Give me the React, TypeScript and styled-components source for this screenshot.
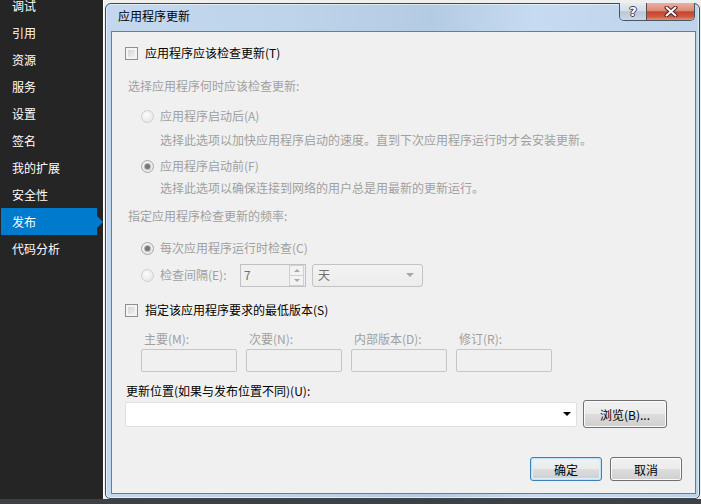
import React from "react";
import styled, { createGlobalStyle } from "styled-components";

const FONT = `"Noto Sans CJK SC", "Noto Sans", "Liberation Sans", sans-serif`;
const DISABLED = "#a0a0a0";

const Global = createGlobalStyle`
  html, body { margin: 0; padding: 0; width: 701px; height: 504px; overflow: hidden; background: #252526; }
  * { box-sizing: border-box; }
`;

const Screen = styled.div`
  width: 701px;
  height: 504px;
  display: flex;
  flex-direction: column;
  font-family: ${FONT};
  font-size: 12px;
`;

const Main = styled.div`
  display: flex;
  height: 499px;
`;

const StatusStrip = styled.div`
  height: 5px;
  background: #3d4044;
`;

const Sidebar = styled.nav`
  width: 103px;
  background: #252526;
  padding-left: 1px;
  overflow: hidden;
`;

const NavList = styled.ul`
  list-style: none;
  margin: -8px 0 0;
  padding: 0;
`;

const NavItem = styled.li<{ $active?: boolean }>`
  position: relative;
  width: 96px;
  height: 27px;
  line-height: 27px;
  padding-left: 11px;
  color: #ffffff;
  white-space: nowrap;
  background: ${(p) => (p.$active ? "#007acc" : "transparent")};
  &::after {
    content: "";
    display: ${(p) => (p.$active ? "block" : "none")};
    position: absolute;
    left: 100%;
    top: 50%;
    margin-top: -6px;
    border-left: 6px solid #007acc;
    border-top: 6px solid transparent;
    border-bottom: 6px solid transparent;
  }
`;

const Workspace = styled.div`
  flex: 1;
  display: flex;
  background: #efefef;
  border-left: 1px solid #ffffff;
  padding: 3px 1px 0 1px;
`;

const Dialog = styled.section`
  flex: 1;
  display: flex;
  flex-direction: column;
  border: 1px solid #3e4955;
  border-radius: 6px 6px 5px 5px;
  padding: 0 3px 4px 5px;
  background: linear-gradient(90deg, #c3d8ee 0%, #bed4eb 30%, #b4cbe4 55%, #c6dbf1 72%, #bdd3eb 100%);
  box-shadow: inset 0 0 0 1px rgba(255, 255, 255, 0.55);
`;

const TitleBar = styled.header`
  height: 27px;
  display: flex;
  align-items: flex-start;
`;

const TitleText = styled.span`
  padding-left: 7px;
  line-height: 24px;
  color: #000;
`;

const CaptionButtons = styled.div`
  margin-left: auto;
  margin-top: -1px;
  margin-right: 1px;
  display: flex;
  height: 18px;
  border: 1px solid #4a5561;
  border-top: none;
  border-radius: 0 0 5px 5px;
  overflow: hidden;
`;

const HelpButton = styled.div`
  width: 27px;
  display: flex;
  align-items: center;
  justify-content: center;
  border-right: 1px solid #5a4a4a;
  background: linear-gradient(180deg, #e4ebf3 0%, #d3dde8 45%, #bac8d6 52%, #c9d7e6 100%);
  color: #ffffff;
  font-family: "DejaVu Sans", sans-serif;
  font-weight: bold;
  font-size: 13px;
  line-height: 1;
  text-shadow: 1px 0 0 #38414b, -1px 0 0 #38414b, 0 1px 0 #38414b, 0 -1px 0 #38414b;
`;

const CloseButton = styled.div`
  width: 47px;
  display: flex;
  align-items: center;
  justify-content: center;
  background: linear-gradient(180deg, #eab0a2 0%, #dc8a78 45%, #c8452d 52%, #cf5a42 80%, #e3907a 100%);
`;

const Client = styled.div`
  flex: 1;
  display: flex;
  flex-direction: column;
  background: #f0f0f0;
  border: 1px solid #6e7b89;
  padding: 13px 13px 12px 13px;
  color: #000;
`;

const CheckRow = styled.label<{ $mt?: number }>`
  display: flex;
  align-items: center;
  gap: 7px;
  height: 16px;
  line-height: 16px;
  margin-top: ${(p) => p.$mt ?? 0}px;
`;

const CheckBox = styled.span`
  width: 13px;
  height: 13px;
  flex: none;
  border: 1px solid #8e8f8f;
  background: linear-gradient(135deg, #c9cdd3 0%, #e6e7e9 60%, #f7f7f7 100%);
  box-shadow: inset 0 0 0 2px #f4f4f4;
`;

const SectionLabel = styled.div<{ $mt?: number }>`
  padding-left: 3px;
  height: 16px;
  line-height: 16px;
  color: ${DISABLED};
  margin-top: ${(p) => p.$mt ?? 0}px;
`;

const OptionRow = styled.div<{ $mt?: number; $h?: number }>`
  display: flex;
  align-items: center;
  padding-left: 16px;
  height: ${(p) => p.$h ?? 16}px;
  line-height: 16px;
  color: ${DISABLED};
  margin-top: ${(p) => p.$mt ?? 0}px;
`;

const Radio = styled.span<{ $checked?: boolean }>`
  position: relative;
  width: 13px;
  height: 13px;
  flex: none;
  margin-right: 6px;
  border-radius: 50%;
  border: 1px solid ${(p) => (p.$checked ? "#a8a8a8" : "#cfcfcf")};
  background: radial-gradient(circle at 40% 35%, #fbfbfb 0%, #e9e9e9 70%, #dcdcdc 100%);
  &::after {
    content: "";
    display: ${(p) => (p.$checked ? "block" : "none")};
    position: absolute;
    left: 3px;
    top: 3px;
    width: 5px;
    height: 5px;
    border-radius: 50%;
    background: #777777;
    box-shadow: 0 0 0 1px #b8b8b8;
  }
`;

const OptionLabel = styled.span<{ $w?: number }>`
  white-space: nowrap;
  width: ${(p) => (p.$w ? `${p.$w}px` : "auto")};
`;

const Hint = styled.div<{ $mt?: number }>`
  padding-left: 35px;
  height: 16px;
  line-height: 16px;
  color: ${DISABLED};
  white-space: nowrap;
  margin-top: ${(p) => p.$mt ?? 0}px;
`;

const SpinBox = styled.div`
  display: flex;
  width: 66px;
  height: 23px;
  border: 1px solid #bfc1c6;
  background: #f0f0f0;
`;

const SpinValue = styled.span`
  flex: 1;
  padding-left: 3px;
  line-height: 20px;
  color: #707070;
`;

const SpinButtons = styled.div`
  width: 15px;
  margin: 0 1px 0 0;
  display: flex;
  flex-direction: column;
`;

const SpinButton = styled.span<{ $up?: boolean }>`
  flex: 1;
  display: flex;
  align-items: center;
  justify-content: center;
  border: 1px solid #d0d0d0;
  border-top-width: ${(p) => (p.$up ? 1 : 0)}px;
  background: #f3f3f3;
  &::before {
    content: "";
    border-left: 3px solid transparent;
    border-right: 3px solid transparent;
    ${(p) => (p.$up ? "border-bottom: 3px solid #a8a8a8;" : "border-top: 3px solid #a8a8a8;")}
  }
`;

const Dropdown = styled.div`
  margin-left: 6px;
  width: 111px;
  height: 23px;
  display: flex;
  align-items: center;
  justify-content: space-between;
  padding: 0 8px 0 5px;
  border: 1px solid #c3c3c3;
  border-radius: 3px;
  background: linear-gradient(180deg, #f3f3f3 0%, #ececec 100%);
  color: #707070;
  &::after {
    content: "";
    border-left: 4px solid transparent;
    border-right: 4px solid transparent;
    border-top: 4px solid #a6a6a6;
  }
`;

const VersionGrid = styled.div<{ $mt?: number }>`
  display: grid;
  grid-template-columns: repeat(4, 96px);
  column-gap: 9px;
  padding-left: 16px;
  margin-top: ${(p) => p.$mt ?? 0}px;
`;

const VersionField = styled.div`
  display: flex;
  flex-direction: column;
  gap: 2px;
`;

const FieldLabel = styled.span`
  padding-left: 3px;
  height: 16px;
  line-height: 16px;
  color: ${DISABLED};
  white-space: nowrap;
`;

const DisabledBox = styled.div`
  height: 23px;
  border: 1px solid #c6c6c6;
  border-radius: 2px;
  background: #f0f0f0;
`;

const PlainLabel = styled.div<{ $mt?: number }>`
  padding-left: 1px;
  height: 16px;
  line-height: 16px;
  color: #000;
  white-space: nowrap;
  margin-top: ${(p) => p.$mt ?? 0}px;
`;

const LocationRow = styled.div<{ $mt?: number }>`
  display: flex;
  align-items: center;
  gap: 6px;
  height: 28px;
  margin-top: ${(p) => p.$mt ?? 0}px;
`;

const ComboInput = styled.div`
  width: 452px;
  height: 25px;
  display: flex;
  align-items: center;
  justify-content: flex-end;
  padding-right: 5px;
  background: #ffffff;
  border: 1px solid #dde1e7;
  border-radius: 2px;
  &::after {
    content: "";
    border-left: 4px solid transparent;
    border-right: 4px solid transparent;
    border-top: 4px solid #000;
  }
`;

const PushButton = styled.button<{ $w: number; $h?: number; $default?: boolean }>`
  width: ${(p) => p.$w}px;
  height: ${(p) => p.$h ?? 24}px;
  padding: 0;
  font-family: ${FONT};
  font-size: 12px;
  color: #000;
  border: 1px solid ${(p) => (p.$default ? "#3d80b2" : "#707070")};
  border-radius: 3px;
  background: linear-gradient(180deg, #f2f2f2 0%, #ebebeb 49%, #dddddd 51%, #cfcfcf 100%);
  box-shadow: inset 0 0 0 1px ${(p) => (p.$default ? "#bfe3f7" : "#fbfbfb")}
    ${(p) => (p.$default ? ", inset 0 0 0 2px #dcf0fb" : "")};
`;

const Footer = styled.div`
  margin-top: auto;
  display: flex;
  justify-content: flex-end;
  gap: 8px;
`;

const navItems = ["调试", "引用", "资源", "服务", "设置", "签名", "我的扩展", "安全性", "发布", "代码分析"];

const CloseGlyph = () => (
  <svg width="14" height="11" viewBox="0 0 14 11">
    <path d="M2.5 1.5 L11.5 9.5 M11.5 1.5 L2.5 9.5" stroke="#4a2220" strokeWidth="4" strokeLinecap="round" />
    <path d="M2.5 1.5 L11.5 9.5 M11.5 1.5 L2.5 9.5" stroke="#ffffff" strokeWidth="2" strokeLinecap="round" />
  </svg>
);

export default function App() {
  return (
    <>
      <Global />
      <Screen>
        <Main>
          <Sidebar>
            <NavList>
              {navItems.map((n) => (
                <NavItem key={n} $active={n === "发布"}>
                  {n}
                </NavItem>
              ))}
            </NavList>
          </Sidebar>
          <Workspace>
            <Dialog>
              <TitleBar>
                <TitleText>应用程序更新</TitleText>
                <CaptionButtons>
                  <HelpButton>?</HelpButton>
                  <CloseButton>
                    <CloseGlyph />
                  </CloseButton>
                </CaptionButtons>
              </TitleBar>
              <Client>
                <CheckRow>
                  <CheckBox />
                  应用程序应该检查更新(T)
                </CheckRow>
                <SectionLabel $mt={17}>选择应用程序何时应该检查更新:</SectionLabel>
                <OptionRow $mt={14}>
                  <Radio />
                  <OptionLabel>应用程序启动后(A)</OptionLabel>
                </OptionRow>
                <Hint $mt={8}>选择此选项以加快应用程序启动的速度。直到下次应用程序运行时才会安装更新。</Hint>
                <OptionRow $mt={10}>
                  <Radio $checked />
                  <OptionLabel>应用程序启动前(F)</OptionLabel>
                </OptionRow>
                <Hint $mt={6}>选择此选项以确保连接到网络的用户总是用最新的更新运行。</Hint>
                <SectionLabel $mt={12}>指定应用程序检查更新的频率:</SectionLabel>
                <OptionRow $mt={16}>
                  <Radio $checked />
                  <OptionLabel>每次应用程序运行时检查(C)</OptionLabel>
                </OptionRow>
                <OptionRow $mt={7} $h={24}>
                  <Radio />
                  <OptionLabel $w={80}>检查间隔(E):</OptionLabel>
                  <SpinBox>
                    <SpinValue>7</SpinValue>
                    <SpinButtons>
                      <SpinButton $up />
                      <SpinButton />
                    </SpinButtons>
                  </SpinBox>
                  <Dropdown>天</Dropdown>
                </OptionRow>
                <CheckRow $mt={15}>
                  <CheckBox />
                  指定该应用程序要求的最低版本(S)
                </CheckRow>
                <VersionGrid $mt={13}>
                  {["主要(M):", "次要(N):", "内部版本(D):", "修订(R):"].map((l) => (
                    <VersionField key={l}>
                      <FieldLabel>{l}</FieldLabel>
                      <DisabledBox />
                    </VersionField>
                  ))}
                </VersionGrid>
                <PlainLabel $mt={11}>更新位置(如果与发布位置不同)(U):</PlainLabel>
                <LocationRow $mt={1}>
                  <ComboInput />
                  <PushButton $w={84} $h={28}>
                    浏览(B)...
                  </PushButton>
                </LocationRow>
                <Footer>
                  <PushButton $w={72} $default>
                    确定
                  </PushButton>
                  <PushButton $w={72}>取消</PushButton>
                </Footer>
              </Client>
            </Dialog>
          </Workspace>
        </Main>
        <StatusStrip />
      </Screen>
    </>
  );
}
